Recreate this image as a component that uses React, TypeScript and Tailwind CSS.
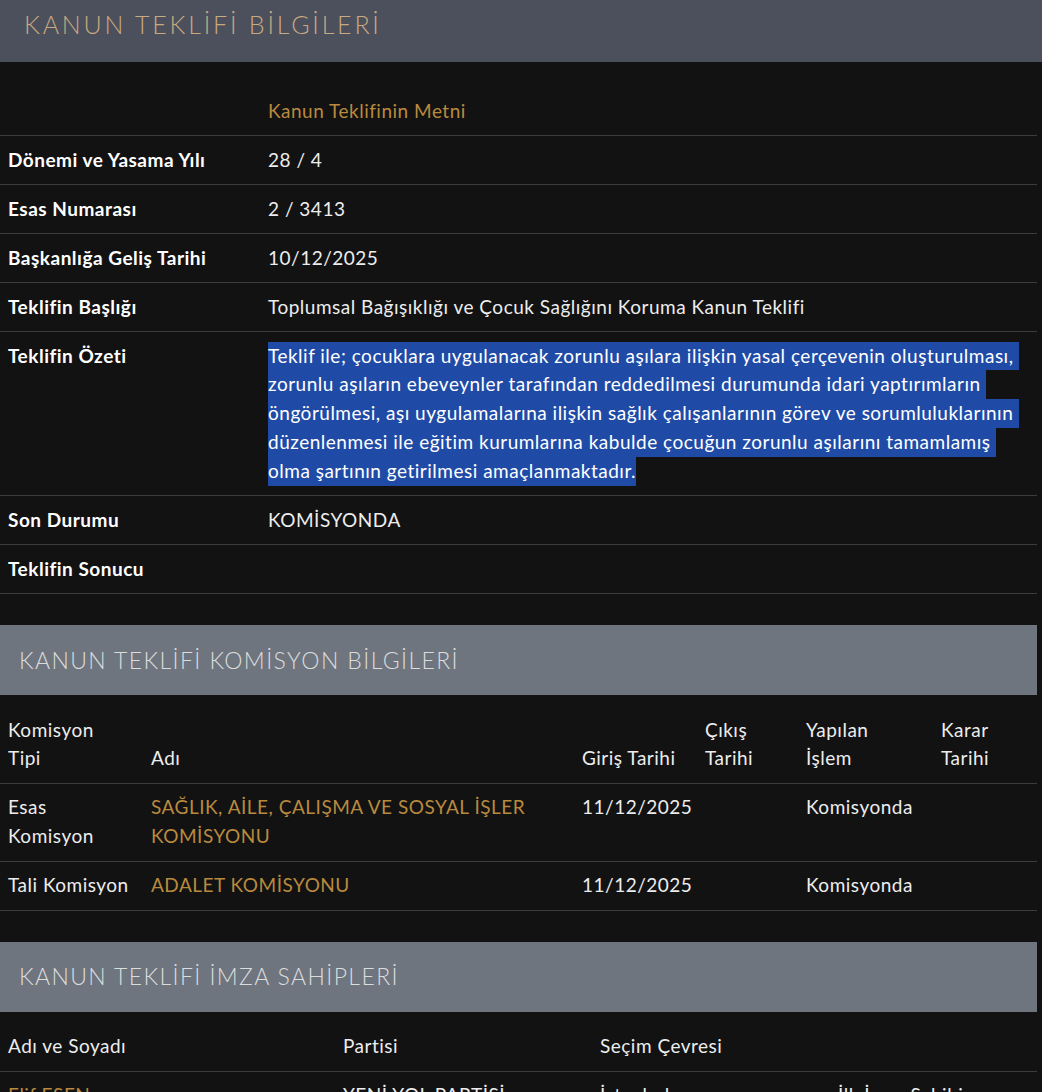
import React from "react";

const F = "font-['Lato','Noto_Sans',sans-serif]";

function InfoRow({ label, children }: { label: string; children?: React.ReactNode }) {
  return (
    <div className="grid grid-cols-[260px_1fr] border-b border-[#3c3c3c]">
      <div className="px-2 py-[9.6px] leading-[28.8px] font-bold text-white">{label}</div>
      <div className="px-2 py-[9.6px] leading-[28.8px]">{children}</div>
    </div>
  );
}

const summary = [
  "Teklif ile; çocuklara uygulanacak zorunlu aşılara ilişkin yasal çerçevenin oluşturulması, ",
  "zorunlu aşıların ebeveynler tarafından reddedilmesi durumunda idari yaptırımların ",
  "öngörülmesi, aşı uygulamalarına ilişkin sağlık çalışanlarının görev ve sorumluluklarının ",
  "düzenlenmesi ile eğitim kurumlarına kabulde çocuğun zorunlu aşılarını tamamlamış ",
  "olma şartının getirilmesi amaçlanmaktadır.",
];

function SectionHeader({ title }: { title: string }) {
  return (
    <div className="w-[1037px] h-[70px] bg-[#6e757f] flex items-center pl-[19px]">
      <span className="text-[23px] font-light tracking-[1.4px] text-[#dcdcdc] leading-none">{title}</span>
    </div>
  );
}

export default function App() {
  return (
    <div className={`${F} min-h-screen bg-[#121212] text-[19px] tracking-[0.5px] text-[#ededed] overflow-hidden`}>
      <div className="h-[62px] bg-[#4b505c] pl-6 pt-[7px]">
        <span className="text-[25px] font-light tracking-[2.8px] text-[#c9a97f] leading-[34px]">
          KANUN TEKLİFİ BİLGİLERİ
        </span>
      </div>

      <div className="w-[1037px] pt-[25px]">
        <div className="grid grid-cols-[260px_1fr] border-b border-[#3c3c3c]">
          <div className="px-2 py-[9.6px] leading-[28.8px]">&nbsp;</div>
          <div className="px-2 py-[9.6px] leading-[28.8px] text-[#b98a3e]">Kanun Teklifinin Metni</div>
        </div>
        <InfoRow label="Dönemi ve Yasama Yılı">28 / 4</InfoRow>
        <InfoRow label="Esas Numarası">2 / 3413</InfoRow>
        <InfoRow label="Başkanlığa Geliş Tarihi">10/12/2025</InfoRow>
        <InfoRow label="Teklifin Başlığı">Toplumsal Bağışıklığı ve Çocuk Sağlığını Koruma Kanun Teklifi</InfoRow>
        <InfoRow label="Teklifin Özeti">
          <div className="flex flex-col items-start">
            {summary.map((l, i) => (
              <span key={i} className="block w-fit whitespace-pre bg-[#1f4ba7] text-white">
                {l}
              </span>
            ))}
          </div>
        </InfoRow>
        <InfoRow label="Son Durumu">KOMİSYONDA</InfoRow>
        <InfoRow label="Teklifin Sonucu" />
      </div>

      <div className="mt-[31px]">
        <SectionHeader title="KANUN TEKLİFİ KOMİSYON BİLGİLERİ" />
      </div>

      <div className="w-[1037px] pt-[11px]">
        <div className="grid grid-cols-[143px_431px_123px_101px_135px_1fr] items-end border-b border-[#3c3c3c] leading-[28.8px]">
          <div className="px-2 py-[9.6px]">Komisyon<br />Tipi</div>
          <div className="px-2 py-[9.6px]">Adı</div>
          <div className="px-2 py-[9.6px] whitespace-nowrap">Giriş Tarihi</div>
          <div className="px-2 py-[9.6px]">Çıkış<br />Tarihi</div>
          <div className="px-2 py-[9.6px]">Yapılan<br />İşlem</div>
          <div className="px-2 py-[9.6px]">Karar<br />Tarihi</div>
        </div>
        <div className="grid grid-cols-[143px_431px_123px_101px_135px_1fr] items-start border-b border-[#3c3c3c] leading-[28.8px]">
          <div className="px-2 py-[9.6px]">Esas<br />Komisyon</div>
          <div className="px-2 py-[9.6px] text-[#b98a3e] whitespace-nowrap">SAĞLIK, AİLE, ÇALIŞMA VE SOSYAL İŞLER<br />KOMİSYONU</div>
          <div className="px-2 py-[9.6px]">11/12/2025</div>
          <div className="px-2 py-[9.6px]"></div>
          <div className="px-2 py-[9.6px]">Komisyonda</div>
          <div className="px-2 py-[9.6px]"></div>
        </div>
        <div className="grid grid-cols-[143px_431px_123px_101px_135px_1fr] items-start border-b border-[#3c3c3c] leading-[28.8px]">
          <div className="px-2 py-[9.6px] whitespace-nowrap">Tali Komisyon</div>
          <div className="px-2 py-[9.6px] text-[#b98a3e]">ADALET KOMİSYONU</div>
          <div className="px-2 py-[9.6px]">11/12/2025</div>
          <div className="px-2 py-[9.6px]"></div>
          <div className="px-2 py-[9.6px]">Komisyonda</div>
          <div className="px-2 py-[9.6px]"></div>
        </div>
      </div>

      <div className="mt-[31px]">
        <SectionHeader title="KANUN TEKLİFİ İMZA SAHİPLERİ" />
      </div>

      <div className="w-[1037px] pt-[11px]">
        <div className="grid grid-cols-[335px_257px_238px_1fr] items-end border-b border-[#3c3c3c] leading-[28.8px]">
          <div className="px-2 py-[9.6px]">Adı ve Soyadı</div>
          <div className="px-2 py-[9.6px]">Partisi</div>
          <div className="px-2 py-[9.6px]">Seçim Çevresi</div>
          <div className="px-2 py-[9.6px]"></div>
        </div>
        <div className="grid grid-cols-[335px_257px_238px_1fr] items-start border-b border-[#3c3c3c] leading-[28.8px]">
          <div className="px-2 py-[9.6px] text-[#b98a3e]">Elif ESEN</div>
          <div className="px-2 py-[9.6px]">YENİ YOL PARTİSİ</div>
          <div className="px-2 py-[9.6px]">İstanbul</div>
          <div className="px-2 py-[9.6px]">İlk İmza Sahibi</div>
        </div>
      </div>
    </div>
  );
}
